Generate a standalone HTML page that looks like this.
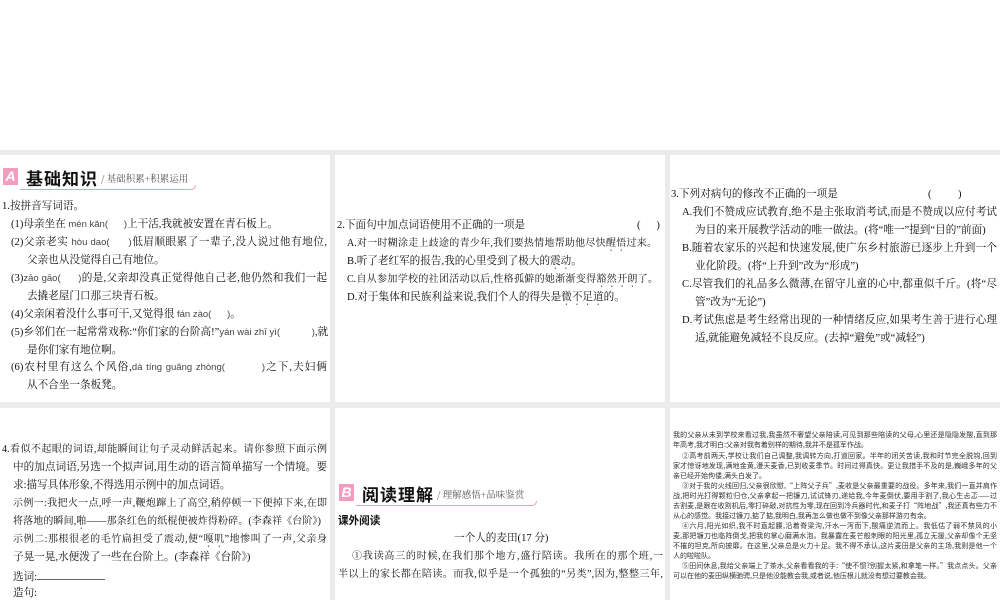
<!DOCTYPE html>
<html><head><meta charset="utf-8"><style>
body{margin:0;width:1000px;height:600px;background:#fff;position:relative;overflow:hidden;font-family:"Liberation Serif","Noto Serif CJK SC","Noto Sans CJK SC",serif;color:#111}
.g{position:absolute;background:#ebebeb}
.p{position:absolute;background:#fff;overflow:hidden}
.l{position:absolute;white-space:nowrap;font-size:10.6px;line-height:18px}
.j{text-align:justify;text-align-last:justify;white-space:normal;height:18px;overflow:hidden}
.k{font-size:10px}
.s{position:absolute;font-size:7px;line-height:10px;height:10px;overflow:hidden;font-family:"Noto Sans CJK SC",sans-serif;color:#333;text-align:justify;text-align-last:justify;width:324px}
.s.i{width:315px}
.s.n{text-align-last:left}
.py{font-family:"Liberation Sans",sans-serif;font-size:9.5px;color:#444}
.hd{position:absolute;height:20px}
.bx{position:absolute;left:0;top:1px;width:15px;height:17px;background:#f29cc0;color:#fff;font:italic bold 14px "Liberation Sans",sans-serif;text-align:center;line-height:17px}
.tt{position:absolute;left:23px;top:-2px;font:bold 17px "Noto Sans CJK SC",sans-serif;letter-spacing:1px;white-space:nowrap}
.sub{position:absolute;left:98px;top:4px;font-size:9.5px;color:#555;white-space:nowrap;font-family:"Noto Serif CJK SC",serif}
.ul{position:absolute;left:17px;top:18px;height:4px;border-bottom:1px solid #f29cc0;border-right:1px solid #f29cc0;border-radius:0 0 6px 0}
.d{text-emphasis:dot;-webkit-text-emphasis:dot;text-emphasis-position:under;-webkit-text-emphasis-position:under}
</style></head><body>
<div class="g" style="left:0;top:150px;width:1000px;height:450px"></div>
<div class="p" style="left:0;top:155px;width:330px;height:247px"></div>
<div class="p" style="left:335px;top:155px;width:330px;height:247px"></div>
<div class="p" style="left:670px;top:155px;width:330px;height:247px"></div>
<div class="p" style="left:0;top:408px;width:330px;height:192px"></div>
<div class="p" style="left:335px;top:408px;width:330px;height:192px"></div>
<div class="p" style="left:670px;top:408px;width:330px;height:192px"></div>

<div class="hd" style="left:3px;top:167px;width:195px"><div class="bx">A</div><div class="tt">基础知识</div><div class="sub">/ 基础积累+积累运用</div><div class="ul" style="width:175px"></div></div>
<div class="l" style="left:2px;top:198px">1.按拼音写词语。</div>
<div class="l" style="left:11px;top:216px">(1)母亲坐在 <span class="py">mén kǎn(&nbsp;&nbsp;&nbsp;&nbsp;&nbsp;&nbsp;)</span>上干活,我就被安置在青石板上。</div>
<div class="l j" style="left:11px;top:234px;width:316px">(2)父亲老实 <span class="py">hòu dao(&nbsp;&nbsp;&nbsp;&nbsp;&nbsp;&nbsp;)</span>低眉顺眼累了一辈子,没人说过他有地位,</div>
<div class="l" style="left:27px;top:252px">父亲也从没觉得自己有地位。</div>
<div class="l j" style="left:11px;top:270px;width:316px">(3)<span class="py">zāo gāo(&nbsp;&nbsp;&nbsp;&nbsp;&nbsp;&nbsp;)</span>的是,父亲却没真正觉得他自己老,他仍然和我们一起</div>
<div class="l" style="left:27px;top:288px">去撬老屋门口那三块青石板。</div>
<div class="l" style="left:11px;top:306px">(4)父亲闲着没什么事可干,又觉得很 <span class="py">fán zào(&nbsp;&nbsp;&nbsp;&nbsp;&nbsp;&nbsp;)</span>。</div>
<div class="l" style="left:11px;top:324px">(5)乡邻们在一起常常戏称:“你们家的台阶高!”<span class="py">yán wài zhī yì(&nbsp;&nbsp;&nbsp;&nbsp;&nbsp;&nbsp;&nbsp;&nbsp;&nbsp;&nbsp;&nbsp;&nbsp;)</span>,就</div>
<div class="l" style="left:27px;top:342px">是你们家有地位啊。</div>
<div class="l j" style="left:11px;top:359px;width:316px">(6)农村里有这么个风俗,<span class="py">dà tíng guǎng zhòng(&nbsp;&nbsp;&nbsp;&nbsp;&nbsp;&nbsp;&nbsp;&nbsp;&nbsp;&nbsp;)</span>之下,夫妇俩</div>
<div class="l" style="left:27px;top:377px">从不合坐一条板凳。</div>

<div class="l" style="left:337px;top:217px">2.下面句中加点词语使用不正确的一项是<span style="position:absolute;left:300px">(&nbsp;&nbsp;&nbsp;&nbsp;&nbsp;&nbsp;)</span></div>
<div class="l j k" style="left:347px;top:235px;width:310px">A.对一时糊涂走上歧途的青少年,我们要热情地帮助他尽快<span class="d">醒悟</span>过来。</div>
<div class="l" style="left:347px;top:253px">B.听了老红军的报告,我的心里受到了极大的<span class="d">震动</span>。</div>
<div class="l j k" style="left:347px;top:271px;width:311px">C.自从参加学校的社团活动以后,性格孤僻的她渐渐变得<span class="d">豁然开朗</span>了。</div>
<div class="l" style="left:347px;top:289px">D.对于集体和民族利益来说,我们个人的得失是<span class="d">微不足道</span>的。</div>

<div class="l" style="left:671px;top:186px">3.下列对病句的修改不正确的一项是<span style="position:absolute;left:257px">(&nbsp;&nbsp;&nbsp;&nbsp;&nbsp;&nbsp;&nbsp;&nbsp;&nbsp;&nbsp;)</span></div>
<div class="l j" style="left:682px;top:204px;width:315px">A.我们不赞成应试教育,绝不是主张取消考试,而是不赞成以应付考试</div>
<div class="l" style="left:695px;top:222px">为目的来开展教学活动的唯一做法。(将“唯一”提到“目的”前面)</div>
<div class="l j" style="left:682px;top:240px;width:315px">B.随着农家乐的兴起和快速发展,使广东乡村旅游已逐步上升到一个产</div>
<div class="l" style="left:695px;top:258px">业化阶段。(将“上升到”改为“形成”)</div>
<div class="l j" style="left:682px;top:276px;width:315px">C.尽管我们的礼品多么微薄,在留守儿童的心中,都重似千斤。(将“尽</div>
<div class="l" style="left:695px;top:294px">管”改为“无论”)</div>
<div class="l j" style="left:682px;top:312px;width:315px">D.考试焦虑是考生经常出现的一种情绪反应,如果考生善于进行心理调</div>
<div class="l" style="left:695px;top:330px">适,就能避免减轻不良反应。(去掉“避免”或“减轻”)</div>

<div class="l j k" style="left:2px;top:441px;width:325px">4.看似不起眼的词语,却能瞬间让句子灵动鲜活起来。请你参照下面示例</div>
<div class="l j" style="left:13px;top:459px;width:314px">中的加点词语,另选一个拟声词,用生动的语言简单描写一个情境。要</div>
<div class="l" style="left:13px;top:477px">求:描写具体形象,不得选用示例中的加点词语。</div>
<div class="l j k" style="left:13px;top:495px;width:314px">示例一:我把火一点,呼一声,鞭炮蹿上了高空,稍停顿一下便掉下来,在即</div>
<div class="l j k" style="left:13px;top:513px;width:308px">将落地的瞬间,<span class="d">啪</span>——那条红色的纸棍便被炸得粉碎。(李森祥《台阶》)</div>
<div class="l j k" style="left:13px;top:531px;width:314px">示例二:那根很老的毛竹扁担受了震动,便“<span class="d">嘎叽</span>”地惨叫了一声,父亲身</div>
<div class="l" style="left:13px;top:549px">子晃一晃,水便泼了一些在台阶上。(李森祥《台阶》)</div>
<div class="l" style="left:13px;top:567px">选词:<span style="display:inline-block;width:68px;border-bottom:1px solid #666;height:12px"></span></div>
<div class="l" style="left:13px;top:585px">造句:</div>

<div class="hd" style="left:339px;top:483px;width:200px"><div class="bx">B</div><div class="tt">阅读理解</div><div class="sub">/ 理解感悟+品味鉴赏</div><div class="ul" style="width:180px"></div></div>
<div class="l" style="left:338px;top:512px;font-weight:bold;font-family:'Noto Sans CJK SC',sans-serif">课外阅读</div>
<div class="l" style="left:454px;top:530px">一个人的麦田(17 分)</div>
<div class="l j k" style="left:352px;top:548px;width:311px">①我读高三的时候,在我们那个地方,盛行陪读。我所在的那个班,一</div>
<div class="l j k" style="left:338px;top:566px;width:325px">半以上的家长都在陪读。而我,似乎是一个孤独的“另类”,因为,整整三年,</div>

<div class="s" style="left:673px;top:430px">我的父亲从未到学校来看过我,我虽然不奢望父亲陪读,可见到那些陪读的父母,心里还是隐隐发酸,直到那</div>
<div class="s n" style="left:673px;top:440px">年高考,我才明白:父亲对我有着别样的期待,我并不是孤军作战。</div>
<div class="s i" style="left:682px;top:451px">②高考前两天,学校让我们自己调整,我调转方向,打道回家。半年的闭关苦读,我和时节完全脱钩,回到</div>
<div class="s" style="left:673px;top:461px">家才惊讶地发现,满地金黄,漫天麦香,已到收麦季节。时间过得真快。更让我措手不及的是,巍峨多年的父</div>
<div class="s n" style="left:673px;top:471px">亲已经开始佝偻,满头白发了。</div>
<div class="s i" style="left:682px;top:481px">③对于我的火线回归,父亲很欣慰,“上阵父子兵”,麦收是父亲最重要的战役。多年来,我们一直并肩作</div>
<div class="s" style="left:673px;top:491px">战,把时光打得颗粒归仓,父亲拿起一把镰刀,试试锋刃,递给我,今年麦倒伏,要用手割了,我心生忐忑——过</div>
<div class="s" style="left:673px;top:501px">去割麦,是跟在收割机后,零打碎敲,对抗性为零,现在回到冷兵器时代,和麦子打“阵地战”,我还真有些力不</div>
<div class="s n" style="left:673px;top:511px">从心的感觉。我接过镰刀,掂了掂,我明白,我再怎么做也做不到像父亲那样游刃有余。</div>
<div class="s i" style="left:682px;top:521px">④六月,阳光如织,我不时直起腰,沿着脊梁沟,汗水一泻而下,酸痛逆流而上。我低估了弱不禁风的小</div>
<div class="s" style="left:673px;top:531px">麦,那把镰刀也临阵倒戈,把我的掌心磨满水泡。我暴露在麦芒般刺眼的阳光里,孤立无援,父亲却像个无坚</div>
<div class="s" style="left:673px;top:541px">不摧的坦克,所向披靡。在这里,父亲总是火力十足。我不得不承认,这片麦田是父亲的主场,我则是他一个</div>
<div class="s n" style="left:673px;top:551px">人的啦啦队。</div>
<div class="s i" style="left:682px;top:561px">⑤田间休息,我给父亲端上了茶水,父亲看看我的手:“使不惯?别握太紧,和拿笔一样。”我点点头。父亲</div>
<div class="s n" style="left:673px;top:571px">可以在他的麦田纵横驰骋,只是他没能教会我,或者说,他压根儿就没有想过要教会我。</div>
</body></html>
